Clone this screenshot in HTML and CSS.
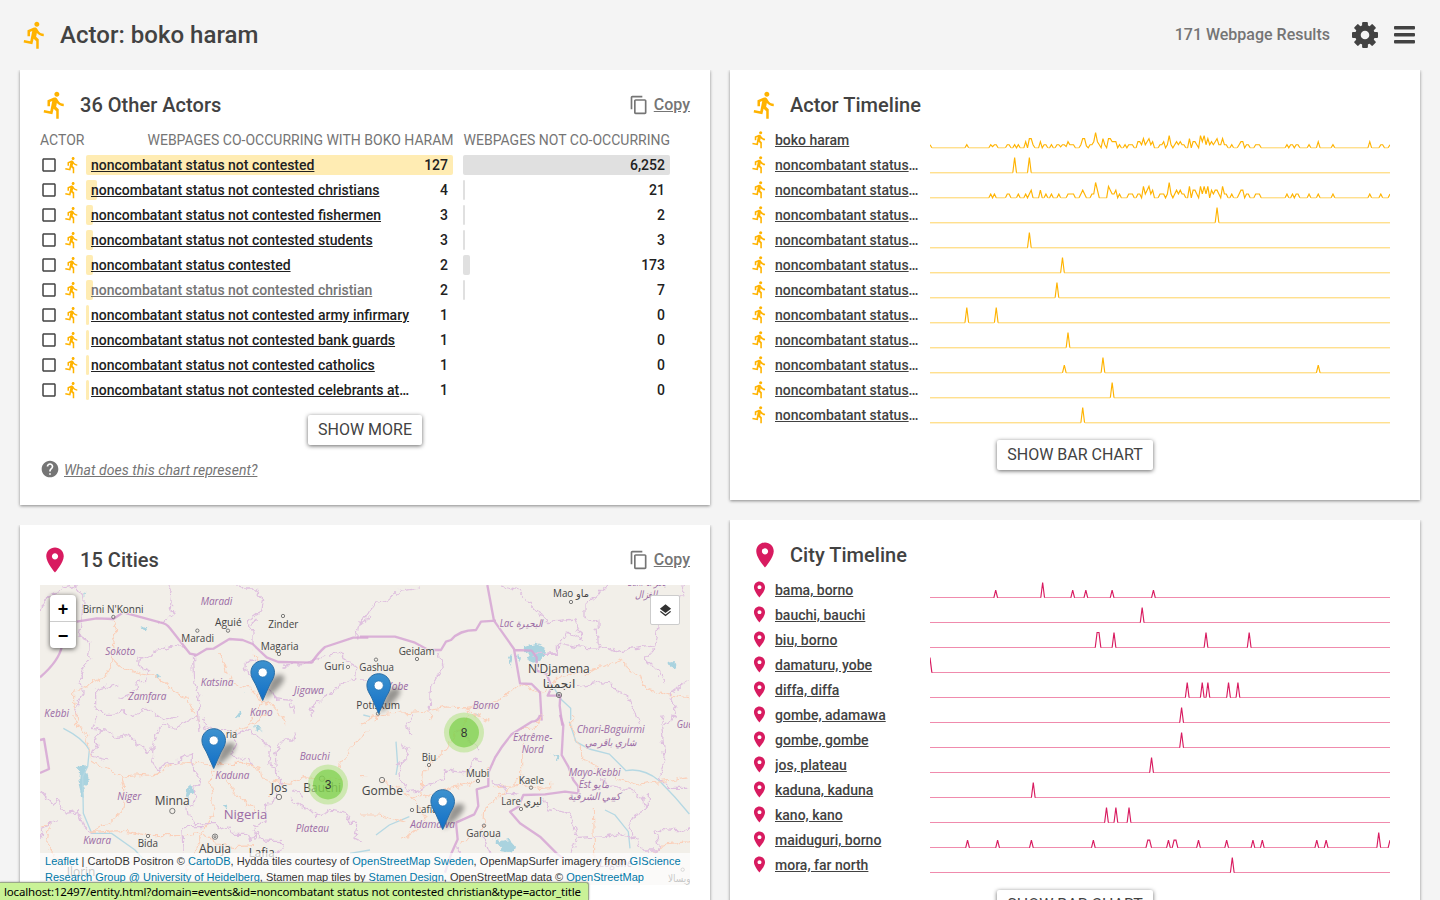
FILE: index.html
```html
<!DOCTYPE html>
<html lang="en">
<head>
<meta charset="utf-8">
<title>Actor: boko haram</title>
<link rel="stylesheet" href="styles.css">
</head>
<body>
<svg class="defs" width="0" height="0">
  <symbol id="run" viewBox="0 0 24 24"><path d="M13.49 5.48c1.1 0 2-.9 2-2s-.9-2-2-2-2 .9-2 2 .9 2 2 2zm-3.6 13.9l1-4.4 2.1 2v6h2v-7.5l-2.1-2 .6-3c1.3 1.5 3.300 2.500 5.500 2.500v-2c-1.900 0-3.500-1-4.300-2.400l-1-1.600c-.4-.6-1-1-1.700-1-.3 0-.5.1-.8.1l-5.200 2.200v4.700h2v-3.400l1.800-.7-1.600 8.100-4.900-1-.4 2 7 1.400z"/></symbol>
  <symbol id="pin" viewBox="0 0 24 24"><path d="M12 2C8.130 2 5 5.130 5 9c0 5.250 7 13 7 13s7-7.750 7-13c0-3.870-3.130-7-7-7zm0 9.500c-1.380 0-2.500-1.120-2.500-2.500s1.120-2.500 2.500-2.500 2.500 1.120 2.500 2.500-1.120 2.500-2.500 2.500z"/></symbol>
  <symbol id="box" viewBox="0 0 24 24"><path d="M19 5v14H5V5h14m0-2H5c-1.100 0-2 .9-2 2v14c0 1.100.9 2 2 2h14c1.100 0 2-.9 2-2V5c0-1.100-.9-2-2-2z"/></symbol>
  <symbol id="copy" viewBox="0 0 24 24"><path d="M16 1H4c-1.100 0-2 .9-2 2v14h2V3h12V1zm3 4H8c-1.100 0-2 .9-2 2v14c0 1.100.9 2 2 2h11c1.100 0 2-.9 2-2V7c0-1.100-.9-2-2-2zm0 16H8V7h11v14z"/></symbol>
  <symbol id="help" viewBox="0 0 24 24"><path d="M12 2C6.480 2 2 6.480 2 12s4.480 10 10 10 10-4.480 10-10S17.520 2 12 2zm1 17h-2v-2h2v2zm2.070-7.750l-.9.920C13.450 12.900 13 13.500 13 15h-2v-.5c0-1.100.45-2.100 1.170-2.830l1.240-1.260c.37-.36.590-.86.590-1.410 0-1.100-.9-2-2-2s-2 .9-2 2H8c0-2.210 1.790-4 4-4s4 1.790 4 4c0 .88-.36 1.680-.93 2.250z"/></symbol>
  <symbol id="layers" viewBox="0 0 24 24"><path d="M11.990 18.540l-7.370-5.730L3 14.070l9 7 9-7-1.630-1.270-7.380 5.740zM12 16l7.360-5.730L21 9l-9-7-9 7 1.630 1.270L12 16z"/></symbol>
  <linearGradient id="blue" x1="0" y1="0" x2="0" y2="1"><stop offset="0" stop-color="#3d92cf"/><stop offset="1" stop-color="#126fc6"/></linearGradient>
  <filter id="soft" x="-40%" y="-40%" width="180%" height="180%"><feGaussianBlur stdDeviation="2.800"/></filter>
  <filter id="wobble" filterUnits="userSpaceOnUse" x="-50" y="-50" width="1200" height="700"><feTurbulence type="fractalNoise" baseFrequency=".045" numOctaves="3" seed="4"/><feDisplacementMap in="SourceGraphic" scale="26" xChannelSelector="R" yChannelSelector="G"/></filter>
  <symbol id="marker" viewBox="0 0 50 46" overflow="visible">
    <path d="M13 41C20 35 34 25 34 18c0-5-9-4-14 2z" fill="#000" opacity=".38" filter="url(#soft)"/>
    <path d="M12.500.7C5.800.7.700 6 .700 12.500c0 4.200 2.300 7.700 4.500 11.500L12.500 40.500 19.800 24c2.200-3.800 4.500-7.300 4.500-11.500C24.300 6 19.200.7 12.500.7z" fill="url(#blue)" stroke="#2b6ea5" stroke-width="1"/>
    <circle cx="12.500" cy="12.500" r="4.600" fill="#fff" stroke="#2f78b5" stroke-width=".8"/>
  </symbol>
</svg>

<header class="topbar">
  <svg class="icon-lg actor"><use href="#run"/></svg>
  <h1>Actor: boko haram</h1>
  <span class="results">171 Webpage Results</span>
  <svg class="gear" viewBox="-15 -15 30 30">
    <g id="teeth"><rect x="-2.900" y="-13" width="5.800" height="26" rx="1"/><rect x="-13" y="-2.900" width="26" height="5.800" rx="1"/></g>
    <use href="#teeth" transform="rotate(45)"/><circle r="9.900"/><circle r="4.300" class="hole"/>
  </svg>
  <svg class="menu" viewBox="0 0 21 18"><rect width="21" height="3.400" y="0" rx="1"/><rect width="21" height="3.400" y="7" rx="1"/><rect width="21" height="3.400" y="14" rx="1"/></svg>
</header>

<main class="columns">
  <div class="column">
    <section class="card">
      <div class="card-head">
        <svg class="icon-lg actor"><use href="#run"/></svg><h2>36 Other Actors</h2>
        <a class="copy"><svg><use href="#copy"/></svg><span>Copy</span></a>
      </div>
      <div class="list-head"><span>ACTOR</span><span class="co">WEBPAGES CO-OCCURRING WITH BOKO HARAM</span><span class="not">WEBPAGES NOT CO-OCCURRING</span></div>
      <div class="list" id="actors"></div>
      <button class="btn more">SHOW MORE</button>
      <div class="help"><svg><use href="#help"/></svg><a>What does this chart represent?</a></div>
    </section>
    <section class="card map-card">
      <div class="card-head">
        <svg class="icon-lg city"><use href="#pin"/></svg><h2>15 Cities</h2>
        <a class="copy"><svg><use href="#copy"/></svg><span>Copy</span></a>
      </div>
      <div class="map">
        <svg class="tiles" viewBox="0 0 650 300">
          <rect width="650" height="300" fill="#f2efe9"/>
          <g class="geo" transform="translate(-10 -45) scale(.333333)">
            <path class="water" d="M334 264l12-6 9 4-8 12zM374 412l10-11 6 4-8 12zM620 520l8-8 5 18-11 2zM163 160l5 3-4 7zM280 299l5 1zM640 455l8 4-6 2zM520 335l6 3z"/>
            <path class="road" d="M250 240l10 30-12 30 6 30-8 30-15 45-40 20-30 20-30 5v40l15 70M248 360l22 22 60 20 45 8 25 18 40 30 30 15 10 30 30 40M565 340l20 30 6 30 15 30 50 10 40 40 50 30 20 40M668 335l15 30 15 120-40 60"/>
            <path class="border" d="M30 215l20-45 50-25 35-8 25 30-5 75M155 242l-8 45 32 15-3 40 12 15-20 10-15 40-10 14 20 36-18 30-10 30M415 135l10 25-4 45 8 20-22 20-22 5M490 345l5 90 15 35-5 45 5 60M615 135l30 12 33 0 20 30-6 38-38 28 15 38 0 30M1020 230l-35 25-5 38M325 375l3-20 30-8 40-30 15 8 35-8 20 10M325 375l28 15-5 30-30 10 2 25-55 20M265 432l-30 8-38 10v45l15 25 45 0 20-5 30 12 40-20 50 35 45-12M645 375l15-12 40 5 15 40-25 20 30 25 20 20 40 5 10 40M645 375l5 30 25 8M900 345l33-5 15 25 30 15-5 40-40 12-30 25-25 15-35 35 5 25M760 375l70-5 60-25M680 240l-18 12"/>
            <path class="nation" d="M30 412q58-50 66-95M140 245l60-10 50 2 30-20 110 30q20 3 30 18l60 76 20 4 30-18 20-1 48-29 40 3 30 12 42 40 35 14 100 2q20-30 40-47 30-10 85-28h45"/>
            <g class="labels"><text x="158" y="218" textLength="183" lengthAdjust="spacingAndGlyphs">Birni N'Konni</text><text x="555" y="259" textLength="80" lengthAdjust="spacingAndGlyphs">Aguié</text><text x="454" y="307" textLength="98" lengthAdjust="spacingAndGlyphs">Maradi</text><text x="715" y="264" textLength="90" lengthAdjust="spacingAndGlyphs">Zinder</text><text x="692" y="330" textLength="114" lengthAdjust="spacingAndGlyphs">Magaria</text><text x="883" y="391" textLength="60" lengthAdjust="spacingAndGlyphs">Guri</text></g>
            <g class="regions"><text x="512" y="195" textLength="95" lengthAdjust="spacingAndGlyphs">Maradi</text><text x="226" y="345" textLength="90" lengthAdjust="spacingAndGlyphs">Sokoto</text><text x="512" y="438" textLength="98" lengthAdjust="spacingAndGlyphs">Katsina</text><text x="295" y="480" textLength="114" lengthAdjust="spacingAndGlyphs">Zamfara</text><text x="792" y="463" textLength="90" lengthAdjust="spacingAndGlyphs">Jigawa</text><text x="43" y="531" textLength="74" lengthAdjust="spacingAndGlyphs">Kebbi</text><text x="660" y="527" textLength="68" lengthAdjust="spacingAndGlyphs">Kano</text></g>
            <g class="dots"><circle cx="250" cy="231" r="5"/><circle cx="502" cy="272" r="5"/><circle cx="594" cy="272" r="5"/><circle cx="759" cy="228" r="5"/><circle cx="747" cy="342" r="5"/><circle cx="954" cy="381" r="5"/></g>
          </g>
          <g class="geo" transform="translate(-10 130) scale(.333333)">
            <path class="water" d="M148 152l18-4 8 55-14 10 5 35-12-2-8-50zM675 30l20 12-15 5zM585 270l10 3-6 12zM472 215l10 3 15 8-12 6-8 20-10-2z"/>
            <path class="river" d="M100 40q60 30 78 65l-5 50-15 30 2 110 25 60 60 0 70 50 50 55M960 415l60-10"/>
            <path class="road" d="M125 0q25 40 45 65l15 70 50 30 40 18 10 45-12 65-35 30-55 30M275 183l65-5q40 10 60-15 30-30 80-20l65 7M545 155l-5 50q15 60 5 100l-27 45-30 80-30 60M185 352l90-5 80 15 120 0 40-10M555 145l80 0 55 12 5 35 55 10 30 3 40-20 120 10M600 55l50-20 60-35M550 160q60 50 60 75l75 55M710 250l20-25M518 350l40 40 60 5 60-3M930 160q20-60 90-120M0 350l60-25-10 60 45 70"/>
            <path class="border" d="M200 0l-12 40 35 5 40 22 30-5 60 50 15-5 10-55 20-20 40 8 60-40M220 45l-30 18 10 25-15 35 45 12M370 105l-5 35 20 30 15-20 35-7 25-20 25-6-2 30 20 25 8 28-20 15 10 35-17 25-15-5 5 30 25 25 30 3M520 10l5 25 30 12 35-5 30 20 35-20 60 50 5 60 30 20M760 75l30 0 10-25M760 75l-25 30 5 75 15 25-15 40-30 25-5 45-35 25 5 35M610 65l10 25-15 30 50 15 10 15M30 225l35 40 20-10 20 40 40-5 15 40 30 28M30 365l20-35 30-10M455 335h65v-12l45 0 0 20 30-10 15 25 40 0 10 20 20-25 20 25 60 2 5 20-30 15 5 10M455 335l5 80M780 250l35 25 25 10 20 20 45-20 40 10 20 30 15 0-5 45 20 10M790 220l30 35"/>
            <path class="nation" d="M30 75l12-3 5 30 10 60-27 12"/>
            <g class="labels"><text x="588" y="68" textLength="33" lengthAdjust="spacingAndGlyphs">ria</text><g class="big"><text x="722" y="231" textLength="50" lengthAdjust="spacingAndGlyphs">Jos</text><text x="374" y="271" textLength="105" lengthAdjust="spacingAndGlyphs">Minna</text><text x="820" y="232" textLength="113" lengthAdjust="spacingAndGlyphs">Bauchi</text><text x="507" y="414" textLength="96" lengthAdjust="spacingAndGlyphs">Abuja</text><text x="656" y="425" textLength="78" lengthAdjust="spacingAndGlyphs">Lafia</text><text x="110" y="482" textLength="86" lengthAdjust="spacingAndGlyphs">Ilorin</text></g><text x="323" y="397" textLength="61" lengthAdjust="spacingAndGlyphs">Bida</text></g>
            <g class="regions"><text x="556" y="193" textLength="102" lengthAdjust="spacingAndGlyphs">Kaduna</text><text x="809" y="136" textLength="90" lengthAdjust="spacingAndGlyphs">Bauchi</text><text x="262" y="256" textLength="72" lengthAdjust="spacingAndGlyphs">Niger</text><text x="797" y="352" textLength="100" lengthAdjust="spacingAndGlyphs">Plateau</text><text x="160" y="387" textLength="83" lengthAdjust="spacingAndGlyphs">Kwara</text><text class="country" x="581" y="312" textLength="131" lengthAdjust="spacingAndGlyphs">Nigeria</text></g>
            <g class="dots"><circle cx="427" cy="288" r="8"/><circle cx="747" cy="246" r="8"/><circle cx="876" cy="191" r="8"/><circle cx="555" cy="365" r="8"/><circle cx="555" cy="365" r="3"/><circle cx="354" cy="363" r="5"/></g>
          </g>
          <g class="geo" transform="translate(320 -45) scale(.333333)">
            <path class="water" d="M492 318l35-10 30 15-6 30-28 18-28-12 8-20zM444 350l8-14 6 20-6 22zM470 345l12 10-4 15zM922 362l12-2 12 12-4 14-10-4z"/>
            <path class="river" d="M580 440l20 35 32 30 0 35M345 522l12 4M10 525l20 5"/>
            <path class="road" d="M50 525l150-12 60-12 100 5 75-35 45-40M480 430l60 30 60-50 120-25 65-30 20 35 35 15 15 40 75 20 75 10M200 513l15 27M300 505l40-5M680 405l40-25M320 510l65 35M50 525l-5 20"/>
            <path class="border" d="M0 254l50-68q40 2 70-35l60-10M425 135l45 10 90 100 85-8 22 60-45-20-20 30-10 32-30 0M745 135l-70 60v40l35 5 5 75 50 20 120-18 10-70M590 310l60 10 70 5M885 322l-30 35 40 40 20 25M985 420l-55 40 20 65-40 30M970 135l-10 40M650 440l70-15 25 2 30 30 30 10 30 80M0 420l20 0M235 335l15 50-35 50-5 80M520 343l72 0v-30"/>
            <path class="nation" d="M0 290h105l60 18 40 22 38 0 15-25 15-5q25-30 75-30l15-25 45-3M382 135l20 107 60 85 18 103 35 2 25 25 5 85M465 330l50 2 15 20 0 40 30 10 15 40-12 25 38 0-2 30 8 60"/>
            <g class="labels"><text x="579" y="171" textLength="108" lengthAdjust="spacingAndGlyphs">Mao ماو</text><text x="116" y="345" textLength="108" lengthAdjust="spacingAndGlyphs">Geidam</text><text x="-2" y="393" textLength="104" lengthAdjust="spacingAndGlyphs">Gashua</text><text x="-11" y="508" textLength="131" lengthAdjust="spacingAndGlyphs">Potiskum</text><text class="cap" x="504" y="399" textLength="185" lengthAdjust="spacingAndGlyphs">N'Djamena</text><text class="cap" x="548" y="445" textLength="98" lengthAdjust="spacingAndGlyphs">انجمينا</text></g>
            <g class="regions"><text x="419" y="261" textLength="130" lengthAdjust="spacingAndGlyphs">Lac البحيرة</text><text x="80" y="451" textLength="65" lengthAdjust="spacingAndGlyphs">Yobe</text><text x="338" y="506" textLength="80" lengthAdjust="spacingAndGlyphs">Borno</text><text x="803" y="138" textLength="115" lengthAdjust="spacingAndGlyphs">Bahr el بحر</text><text x="824" y="173" textLength="68" lengthAdjust="spacingAndGlyphs">الغزال</text></g>
            <g class="dots"><circle cx="633" cy="186" r="5"/><circle cx="48" cy="359" r="5"/><circle cx="171" cy="357" r="5"/><circle cx="54" cy="521" r="5"/><circle cx="597" cy="465" r="8"/><circle cx="597" cy="465" r="3"/></g>
          </g>
          <g class="geo" transform="translate(320 130) scale(.333333)">
            <path class="water" d="M405 370l20 10 25-5 18 20-6 18-35-5-5-15-18-10zM570 118l20 5 12 0-8 8z"/>
            <path class="river" d="M108 80l5 70-5 30M48 360l40-30 60-25M628 20l20 60 40 22 60 15 50 50q50-10 100 30 50 50 90 100M735 285l30 15 40 50 5 50"/>
            <path class="road" d="M0 30l35-20 15-10M0 185l20 0M65 195l90 55 30-10 5-65 30-45M160 250l40 70-70 50M220 140l60-70 50-70M190 245l45-15 80-20 40-15 40-45M370 335l5-60 40-25 70-65 0-70 10-60M550 0l-30 40-40 0M400 215l110-5 25 10 40-2 0-15M370 335l-30 20-40 35M700 280l5 160M635 0v45l30 65 0 20 100 60 70 20 100-15 55-10M0 300l60 0 80 25M880 410l50-25 60-5"/>
            <path class="border" d="M120 90l30 10-10 30-25 20 10 50 20 30 35-5 70-35 10-25 65 10 15-40 25 5M395 203l25 5 20 25 40 5M150 60l-10-30 20-30M555 250l10 30 60 15 15 40 10 35-15 45M650 370l85-5 40-10 50 15M825 370l-20-30 20-40 40-20 0-50M825 370l25 35 45 0-10-60 70 5 35-15M865 280l-35-50-90-20-20-40M910 0l-5 30 10 100-20 60 30 30 60 0M300 410l-10-10M370 360l20 50M290 45l70 60"/>
            <path class="nation" d="M540 0q-5 20-25 20l-60 38q-30 35-50 70l-20 45 0 40-35 10 5 50-12 25-55 25 5 50-18 40-20 60M600 0l10 30-5 90 20 35 15 40 15 20 0 20-40-5-60 8-65 2-15 35-25 15 30 35 60 40 50 50 20 15"/>
            <g class="labels"><text x="185" y="137" textLength="44" lengthAdjust="spacingAndGlyphs">Biu</text><text x="318" y="185" textLength="70" lengthAdjust="spacingAndGlyphs">Mubi</text><text x="476" y="207" textLength="76" lengthAdjust="spacingAndGlyphs">Kaele</text><text class="cap" x="5" y="239" textLength="124" lengthAdjust="spacingAndGlyphs">Gombe</text><text x="424" y="271" textLength="122" lengthAdjust="spacingAndGlyphs">Lare ليري</text><text x="168" y="295" textLength="65" lengthAdjust="spacingAndGlyphs">Lafia</text><text x="319" y="365" textLength="103" lengthAdjust="spacingAndGlyphs">Garoua</text><text x="924" y="500" textLength="68" lengthAdjust="spacingAndGlyphs">ويسالا</text></g>
            <g class="regions"><text x="459" y="78" textLength="118" lengthAdjust="spacingAndGlyphs">Extrême-</text><text x="485" y="113" textLength="66" lengthAdjust="spacingAndGlyphs">Nord</text><text x="650" y="55" textLength="204" lengthAdjust="spacingAndGlyphs">Chari-Baguirmi</text><text x="674" y="93" textLength="155" lengthAdjust="spacingAndGlyphs">شاري باقرمي</text><text x="626" y="183" textLength="156" lengthAdjust="spacingAndGlyphs">Mayo-Kebbi</text><text x="656" y="220" textLength="92" lengthAdjust="spacingAndGlyphs">Est مايو</text><text x="624" y="255" textLength="158" lengthAdjust="spacingAndGlyphs">كيبي الشرقية</text><text x="151" y="338" textLength="134" lengthAdjust="spacingAndGlyphs">Adamawa</text><text x="950" y="38" textLength="75" lengthAdjust="spacingAndGlyphs">Guéra</text><text x="718" y="457" textLength="98" lengthAdjust="spacingAndGlyphs">Logone</text></g>
            <g class="dots"><circle cx="207" cy="150" r="5"/><circle cx="354" cy="198" r="5"/><circle cx="513" cy="218" r="5"/><circle cx="66" cy="195" r="8"/><circle cx="483" cy="282" r="5"/><circle cx="156" cy="285" r="5"/><circle cx="372" cy="332" r="5"/><circle cx="968" cy="464" r="5"/></g>
          </g>
          <g class="clusters"><circle cx="424" cy="147.500" r="20"/><circle cx="424" cy="147.500" r="15"/><circle cx="288" cy="199.500" r="20"/><circle cx="288" cy="199.500" r="15"/><text x="424" y="151.700">8</text><text x="288" y="203.700">3</text></g>
          <use href="#marker" x="210.200" y="75" width="50" height="46"/>
          <use href="#marker" x="326.200" y="88" width="50" height="46"/>
          <use href="#marker" x="161.200" y="143" width="50" height="46"/>
          <use href="#marker" x="390.200" y="204" width="50" height="46"/>
        </svg>
        <div class="zoomer"><span>+</span><span>−</span></div>
        <div class="layer-btn"><svg><use href="#layers"/></svg></div>
        <div class="credits"><div><a>Leaflet</a> | CartoDB Positron © <a>CartoDB</a>, Hydda tiles courtesy of <a>OpenStreetMap Sweden</a>, OpenMapSurfer imagery from <a>GIScience</a></div><div class="second"><a>Research Group @ University of Heidelberg</a>, Stamen map tiles by <a>Stamen Design</a>, OpenStreetMap data © <a>OpenStreetMap</a></div></div>
      </div>
    </section>
  </div>
  <div class="column">
    <section class="card">
      <div class="card-head"><svg class="icon-lg actor"><use href="#run"/></svg><h2>Actor Timeline</h2></div>
      <div class="timeline actor" id="actor-timeline"></div>
      <button class="btn">SHOW BAR CHART</button>
    </section>
    <section class="card">
      <div class="card-head"><svg class="icon-lg city"><use href="#pin"/></svg><h2>City Timeline</h2></div>
      <div class="timeline city" id="city-timeline"></div>
      <button class="btn">SHOW BAR CHART</button>
    </section>
  </div>
</main>
<div class="status">localhost:12497/entity.html?domain=events&amp;id=noncombatant status not contested christian&amp;type=actor_title</div>
<script src="app.js"></script>
</body>
</html>
```
FILE: styles.css
```css
* { box-sizing: border-box; }
body { margin: 0; height: 900px; overflow: hidden; background: #f4f4f4; color: #424242; font-family: Roboto, sans-serif; font-size: 14px; }
.defs { position: absolute; }
h1, h2 { margin: 0; font-weight: 500; }
h1 { font-size: 24px; line-height: 30px; margin-left: 10px; letter-spacing: .03px; }
h2 { font-size: 20px; line-height: 30px; margin-left: 10px; letter-spacing: .03px; }
.icon-lg { width: 30px; height: 30px; flex: none; }
.actor { fill: #ffb300; }
.city { fill: #d81b60; }
.topbar { display: flex; align-items: center; height: 70px; padding: 0 25px 0 20px; }
.results { margin: -1px 0 0 auto; font-size: 16px; font-weight: 500; color: #757575; }
.gear { width: 30px; height: 30px; margin-left: 20px; fill: #424242; }
.gear .hole { fill: #f4f4f4; }
.menu { width: 21px; height: 18px; margin-left: 14px; fill: #424242; }
.columns { display: flex; gap: 20px; padding: 0 20px; align-items: flex-start; height: 830px; overflow: hidden; }
.column { display: flex; flex-direction: column; gap: 20px; width: 690px; }
.card { background: #fff; padding: 20px 20px 0; box-shadow: 0 1px 3px rgba(0,0,0,.45); clip-path: inset(0 -4px -5px -4px); flex: none; }
.column:first-child .card:first-child { height: 435px; }
.column:last-child .card:first-child { height: 430px; }
.card:last-child { height: 430px; }
.card-head { display: flex; align-items: center; height: 30px; }
.copy { margin-left: auto; display: flex; align-items: center; gap: 5px; font-size: 16px; font-weight: 500; color: #757575; }
.copy span { text-decoration: underline; margin-top: -1px; }
.copy svg { width: 20px; height: 20px; fill: #757575; }
.list-head { display: flex; height: 40px; align-items: center; padding-right: 20px; color: #757575; margin: 0 0 -5px; }
.list-head .co { margin-left: auto; }
.list-head .not { margin-left: 10px; }
.list { display: flex; flex-direction: column; gap: 5px; }
.row { display: grid; grid-template-columns: 18px 18px 367px 207px; height: 20px; align-items: center; font-weight: 500; color: #212121; }
.row > svg { width: 18px; height: 18px; fill: #424242; }
.row > svg.actor { fill: #ffb300; margin-left: 5px; }
.cell { position: relative; height: 20px; display: flex; align-items: center; padding: 0 5px; margin-left: 10px; width: 367px; }
.cell.gray { width: 207px; margin-left: 20px; justify-content: flex-end; }
.bar { position: absolute; left: 0; top: 0; height: 20px; border-radius: 2px; background: #ffecb3; }
.gray .bar { background: #e0e0e0; }
.name { position: relative; width: 319px; overflow: hidden; text-overflow: ellipsis; white-space: nowrap; line-height: 20px; }
.name a { text-decoration: underline; }
.visited { color: #757575; }
.num { position: relative; margin-left: auto; }
.btn { display: block; margin: 10px auto 0; height: 30px; padding: 0 10px; border: 0; border-radius: 2px; background: #fff; color: #424242; font: 16px/30px Roboto, sans-serif; box-shadow: 0 1px 4px rgba(0,0,0,.6); white-space: nowrap; }
.more { margin-top: 15px; }
.help { display: flex; align-items: center; height: 20px; margin-top: 15px; gap: 4px; font-style: italic; color: #757575; text-decoration: underline; letter-spacing: .05px; }
.help svg { width: 20px; height: 20px; fill: #757575; margin-top: -2px; }
.timeline { display: flex; flex-direction: column; margin-top: 10px; }
.t-row { display: flex; align-items: flex-start; height: 25px; }
.t-row > svg:first-child { width: 19px; height: 19px; flex: none; margin-right: 6px; }
.t-name { width: 145px; overflow: hidden; text-overflow: ellipsis; white-space: nowrap; color: #424242; font-weight: 500; line-height: 20px; flex: none; }
.t-name a { text-decoration: underline; }
.spark { width: 460px; height: 25px; margin-left: 10px; fill: none; flex: none; }
.map { position: relative; height: 300px; margin-top: 10px; overflow: hidden; font-family: "Liberation Sans", sans-serif; }
.tiles { display: block; width: 650px; height: 300px; }
.geo { fill: none; font-family: "Open Sans", "DejaVu Sans", sans-serif; }
.water { fill: #aad3df; filter: url(#wobble); }
.river { stroke: #b5d8e3; stroke-width: 4; }
.road { stroke: #fbd0ba; stroke-width: 3.500; stroke-linejoin: round; filter: url(#wobble); }
.border { stroke: #dfc0df; stroke-width: 3.800; stroke-linejoin: round; filter: url(#wobble); }
.nation { stroke: #d6a5d3; stroke-width: 7; stroke-linejoin: round; opacity: .85; }
.labels { fill: #444; font-size: 31px; stroke: #f2efe9; stroke-width: 5; paint-order: stroke; }
.big { font-size: 37px; }
.cap { font-size: 36px; }
.regions { fill: #9b6ba5; font-size: 31px; font-style: italic; stroke: #f2efe9; stroke-width: 5; paint-order: stroke; }
.country { font-size: 36px; font-style: normal; }
.dots { stroke: #666; stroke-width: 2.500; }
.clusters { font-family: "Liberation Sans", sans-serif; font-size: 12px; text-anchor: middle; }
.clusters circle { fill: rgba(181,226,140,.6); }
.clusters circle:nth-child(even) { fill: rgba(110,204,57,.6); }
.clusters text { fill: #333; }
.zoomer { position: absolute; left: 10px; top: 10px; width: 26px; height: 53px; background: #fff; border-radius: 4px; box-shadow: 0 1px 5px rgba(0,0,0,.65); font-size: 18px; font-weight: bold; color: #000; text-align: center; line-height: 28px; }
.zoomer span { display: block; height: 27px; }
.zoomer span:first-child { border-bottom: 1px solid #ccc; }
.layer-btn { position: absolute; right: 10px; top: 10px; width: 30px; height: 30px; background: #fff; border: 1px solid #ccc; border-radius: 2px; display: grid; place-items: center; }
.layer-btn svg { width: 15px; height: 15px; fill: #333; }
.credits { position: absolute; left: 0; right: 0; bottom: 0; height: 32px; padding: 0 5px; background: rgba(255,255,255,.7); font-size: 11px; line-height: 16px; color: #333; white-space: nowrap; letter-spacing: .045px; }
.credits .second { letter-spacing: 0; }
.credits a { color: #0078a8; }
.status { position: absolute; left: 0; bottom: 0; width: 589px; height: 18px; padding-left: 4px; background: #c9f297; border: 1px solid #9aa888; border-width: 1px 1px 0 0; border-radius: 0 3px 0 0; color: #000; font: 11.500px/17px "Noto Sans", sans-serif; letter-spacing: -.178px; white-space: nowrap; box-shadow: 0 0 2px rgba(0,0,0,.4); }
```
FILE: app.js
```javascript
const base = 'noncombatant status not contested';
const actors = [
  [base, '127', 367, '6,252', 207],
  [base + ' christians', '4', 11, '21', 2],
  [base + ' fishermen', '3', 7, '2', 2],
  [base + ' students', '3', 7, '3', 2],
  ['noncombatant status contested', '2', 7, '173', 7],
  [base + ' christian', '2', 7, '7', 2, 'visited'],
  [base + ' army infirmary', '1', 3, '0', 0],
  [base + ' bank guards', '1', 3, '0', 0],
  [base + ' catholics', '1', 3, '0', 0],
  [base + ' celebrants at church', '1', 3, '0', 0]
];
document.getElementById('actors').innerHTML = actors.map(([name, co, w, not, g, cls]) =>
  `<div class="row"><svg><use href="#box"/></svg><svg class="actor"><use href="#run"/></svg>
  <div class="cell"><div class="bar" style="width:${w}px"></div><div class="name ${cls || ''}"><a>${name}</a></div><span class="num">${co}</span></div>
  <div class="cell gray"><div class="bar" style="width:${g}px"></div><span class="num">${not}</span></div></div>`).join('');

// Each run is "start index:values"; every other sample is zero.
const n = base;
const actorRows = [
  ['boko haram', 5, '0:1 20:1 33:1 34:.4 35:1,1 42:1,1 46:1 48:1 52:2,0,3,3,1 60:2,0,1,1 66:1 69:1,1,.3,1,1,.4,2,1,1,1 82:1,3,3,.6,0,1,1,2,5,2,1,0,3,1,0,3,3,2,2,2,0,1 106:1,0,1,1,1 113:2,2,1,3,1,2,3,1,2,0,0,0,1,1,2,0,1,4,1,0,1,2,1,2,1,1,0,0,3,0,2,2,1,0,4,2,4,1,3,1,2,1,2,3,1,1,3,1,1 164:1 168:1,2,2,0,1,1 177:1,1,1 194:1,0,1,1,0,1,1 206:1 211:2 219:1 239:2 245:1,1 250:1'],
  [n, 1, '46:1 54:1'],
  [n, 4, '33:1,0,1 42:1,1 48:1 52:1,0,1,2 60:2 63:1 66:1 70:1 75:1,1,1,1 82:1,2,1 88:1,1,4,2 97:3,2,1,1,2,0,1 108:1,1,1 113:1,1,0,3,1,2,3,1,2,0,0,0,1,1,1,0,1,4,1,0,1,2,1,2,1,1,0,0,3,0,2,2,1,0,3,1,3,1,3,0,2,1,2,2,1,0,3,1,1 164:1 168:1,2,2,0,1,1 177:1,1,1 194:1 197:1 199:1,1 206:1 211:1 219:1 239:1 245:1 250:1'],
  [n, 1, '156:1'], [n, 1, '54:1'], [n, 1, '72:1'], [n, 1, '69:1'], [n, 1, '20:1 36:1'],
  [n, 1, '75:1'], [n, 2, '73:1 94:2 211:1'], [n, 1, '99:1'], [n, 1, '83:1']
];
const cityRows = [
  ['bama, borno', 2, '35:1 60:2 76:1 83:1 97:1 119:1'],
  ['bauchi, bauchi', 1, '113:1'],
  ['biu, borno', 1, '89:1,1 98:1 147:1 170:1'],
  ['damaturu, yobe', 1, '0:1'],
  ['diffa, diffa', 1, '137:1 145:1 148:1 159:1 164:1'],
  ['gombe, adamawa', 1, '134:1'],
  ['gombe, gombe', 1, '134:1'],
  ['jos, plateau', 1, '118:1'],
  ['kaduna, kaduna', 1, '55:1'],
  ['kano, kano', 1, '94:1 99:1 106:1'],
  ['maiduguri, borno', 2, '20:1 36:1 54:1 87:1 116:1,1 127:1 130:1,1 143:1 158:1 172:1 177:1 206:1 211:1 239:2 245:1'],
  ['mora, far north', 1, '161:1']
];

function spark(max, runs, count, color, baseline) {
  const v = new Array(count + 1).fill(0);
  runs.split(' ').forEach(run => {
    const [start, values] = run.split(':');
    values.split(',').forEach((x, i) => { v[+start + i] = +x; });
  });
  const step = 460 / count;
  let peaks = '', flat = '';
  for (let i = 0; i < count; i++) {
    const seg = (a, b) => `M${(i * step).toFixed(2)} ${a}L${((i + 1) * step).toFixed(2)} ${b}`;
    if (!v[i] && !v[i + 1]) flat += `M${(i * step).toFixed(2)} 0H${((i + 1) * step).toFixed(2)}`;
    else {
      const a = (17.8 - v[i] / max * 15.3).toFixed(2), b = (17.8 - v[i + 1] / max * 15.3).toFixed(2);
      const prev = i && (v[i - 1] || v[i]);
      peaks += prev ? `L${((i + 1) * step).toFixed(2)} ${b}` : seg(a, b);
    }
  }
  const lines = baseline.map(([y, c]) => `<path d="${flat}" transform="translate(0 ${y})" stroke="${c}" shape-rendering="crispEdges"/>`).join('');
  return `<svg class="spark" viewBox="0 0 460 25">${lines}<path d="${peaks}" stroke="${color}" stroke-width="1.15"/></svg>`;
}
function fill(id, rows, icon, count, color, baseline) {
  document.getElementById(id).innerHTML = rows.map(([name, max, runs]) =>
    `<div class="t-row"><svg><use href="#${icon}"/></svg><div class="t-name"><a>${name}</a></div>${spark(max, runs, count, color, baseline)}</div>`).join('');
}
fill('actor-timeline', actorRows, 'run', 250, '#ffb300', [[17.5, '#ffe08f'], [18.5, '#fff1cf']]);
fill('city-timeline', cityRows, 'pin', 245, '#d81b60', [[17.5, '#f08bad']]);
```
